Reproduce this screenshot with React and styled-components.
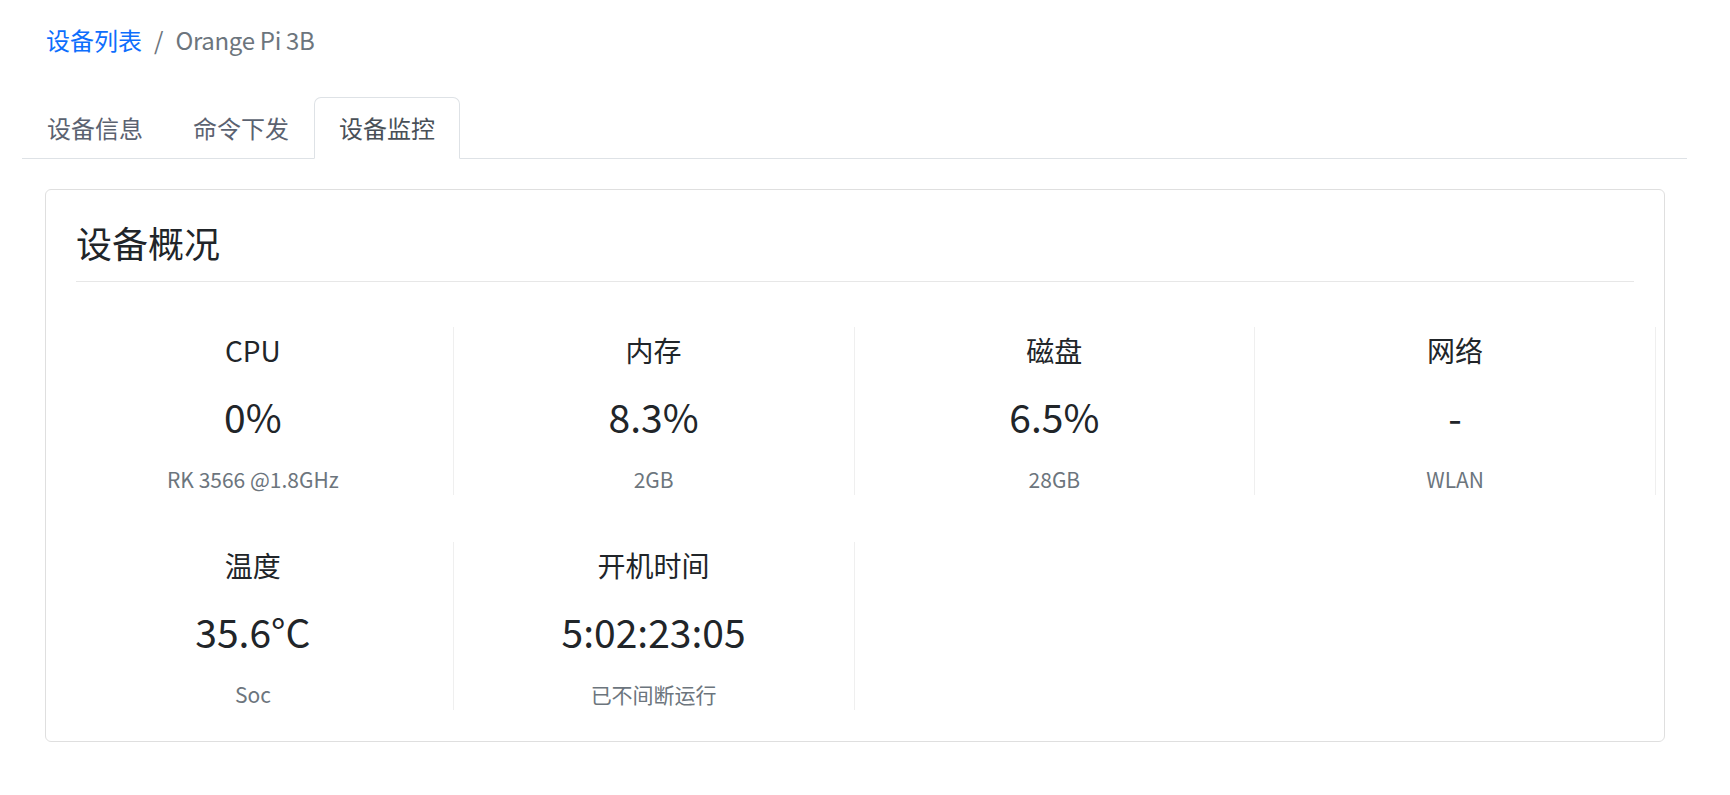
import React from 'react';
import styled, { createGlobalStyle } from 'styled-components';

const GlobalStyle = createGlobalStyle`
  html, body {
    margin: 0;
    padding: 0;
    background: #fff;
  }
  body {
    font-family: "Noto Sans CJK SC", "Noto Sans", sans-serif;
    color: #212529;
  }
  * {
    box-sizing: border-box;
  }
`;

const Page = styled.div`
  padding: 22px 43px 0 22px;
`;

const Breadcrumb = styled.nav`
  display: flex;
  align-items: center;
  padding-left: 24px;
  font-size: 24px;
  line-height: 36px;
  color: #6c757d;
`;

const Crumb = styled.a`
  color: #0d6efd;
  text-decoration: none;
`;

const Sep = styled.span`
  padding: 0 12px;
  color: #6c757d;
`;

const Current = styled.span`
  letter-spacing: -0.3px;
`;

const Tabs = styled.div`
  display: flex;
  margin-top: 39px;
  border-bottom: 1px solid #dee2e6;
`;

const Tab = styled.div`
  padding: 12px 24px;
  font-size: 24px;
  line-height: 36px;
  margin-bottom: -1px;
  border: 1px solid ${p => (p.active ? '#dee2e6' : 'transparent')};
  border-bottom-color: ${p => (p.active ? '#fff' : 'transparent')};
  border-radius: 7px 7px 0 0;
  background: ${p => (p.active ? '#fff' : 'transparent')};
  color: ${p => (p.active ? '#495057' : '#5b6270')};
`;

const Card = styled.div`
  margin: 30px 22px 0 23px;
  border: 1px solid #dfdfdf;
  border-radius: 6px;
  padding: 28px 30px 31px;
`;

const CardTitle = styled.h4`
  margin: 0;
  font-size: 36px;
  font-weight: 400;
  line-height: 48px;
  color: #212529;
`;

const Rule = styled.div`
  height: 1px;
  background: #e7e7e7;
  margin-top: 15px;
`;

const StatGrid = styled.div`
  display: grid;
  grid-template-columns: repeat(4, 1fr);
  row-gap: 47px;
  margin: 45px -22px 0 -23px;
`;

const Stat = styled.div`
  display: flex;
  flex-direction: column;
  align-items: center;
  height: 168px;
  border-right: 1px solid #efefef;
`;

const Label = styled.div`
  font-size: 28px;
  line-height: 44px;
  margin-top: 1px;
`;

const Value = styled.div`
  font-size: 39px;
  line-height: 48px;
  margin-top: 20px;
`;

const Sub = styled.div`
  font-size: 21px;
  line-height: 32px;
  margin-top: 23px;
  color: #6c757d;
`;

const stats = [
  { label: 'CPU', value: '0%', sub: 'RK 3566 @1.8GHz' },
  { label: '内存', value: '8.3%', sub: '2GB' },
  { label: '磁盘', value: '6.5%', sub: '28GB' },
  { label: '网络', value: '-', sub: 'WLAN' },
  { label: '温度', value: '35.6°C', sub: 'Soc' },
  { label: '开机时间', value: '5:02:23:05', sub: '已不间断运行' },
];

const App = () => {
  return (
    <Page>
      <GlobalStyle />
      <Breadcrumb>
        <Crumb href="#">设备列表</Crumb>
        <Sep>/</Sep>
        <Current>Orange Pi 3B</Current>
      </Breadcrumb>
      <Tabs>
        <Tab>设备信息</Tab>
        <Tab>命令下发</Tab>
        <Tab active>设备监控</Tab>
      </Tabs>
      <Card>
        <CardTitle>设备概况</CardTitle>
        <Rule />
        <StatGrid>
          {stats.map(s => (
            <Stat key={s.label}>
              <Label>{s.label}</Label>
              <Value>{s.value}</Value>
              <Sub>{s.sub}</Sub>
            </Stat>
          ))}
        </StatGrid>
      </Card>
    </Page>
  );
};

export default App;
